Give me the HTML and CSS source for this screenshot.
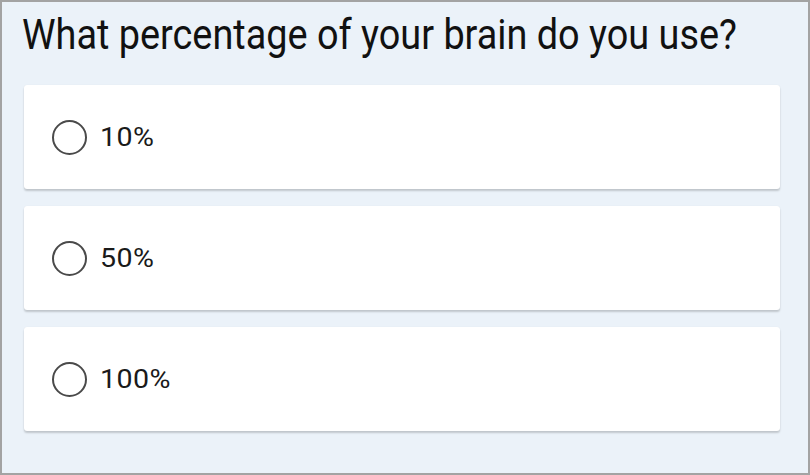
FILE: index.html
```html
<!DOCTYPE html>
<html>
<head>
<meta charset="utf-8">
<link rel="stylesheet" href="styles.css">
</head>
<body>
<div class="frame">
  <h1 class="question">What percentage of your brain do you use?</h1>
  <div class="options">
    <label class="option"><span class="radio"></span><span class="label">10%</span></label>
    <label class="option"><span class="radio"></span><span class="label">50%</span></label>
    <label class="option"><span class="radio"></span><span class="label">100%</span></label>
  </div>
</div>
</body>
</html>
```
FILE: styles.css
```css
html, body {
  margin: 0;
  padding: 0;
}
body {
  width: 810px;
  height: 475px;
  font-family: Roboto, "Liberation Sans", sans-serif;
}
.frame {
  box-sizing: border-box;
  width: 810px;
  height: 475px;
  border: 2px solid #a3a3a3;
  background: #ebf2f9;
  padding: 4px 28px 0 20px;
}
.question {
  margin: 0;
  font-weight: 400;
  font-size: 43px;
  line-height: 56px;
  color: #111111;
  white-space: nowrap;
  transform: scaleX(0.88);
  transform-origin: left center;
}
.options {
  margin-top: 23px;
  margin-left: 2px;
  display: flex;
  flex-direction: column;
  gap: 17px;
}
.option {
  height: 104px;
  background: #ffffff;
  border-radius: 3px;
  box-shadow: 0 2px 2px rgba(0,0,0,0.18), 0 0 1px rgba(0,0,0,0.08);
  display: flex;
  align-items: center;
  padding-left: 28px;
  gap: 13px;
}
.radio {
  box-sizing: border-box;
  width: 35px;
  height: 35px;
  border: 2px solid #4a4a4a;
  border-radius: 50%;
}
.label {
  display: inline-block;
  font-size: 26px;
  letter-spacing: 0.4px;
  color: #1a1a1a;
  transform: scaleX(1.1);
  transform-origin: left center;
}
```
